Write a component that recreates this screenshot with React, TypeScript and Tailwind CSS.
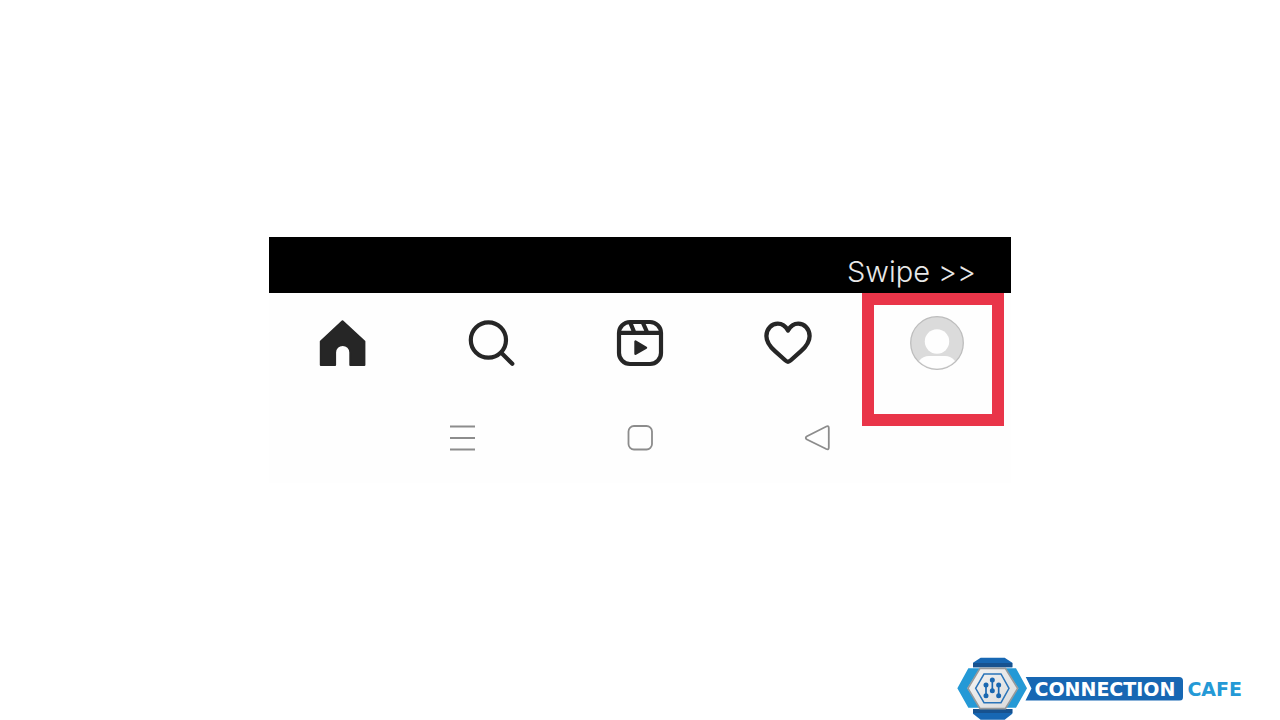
import type { ReactNode } from 'react';

const HomeIcon = () => (
  <svg viewBox="0 0 48 48" className="size-12" fill="#262626" stroke="#262626" strokeWidth="2" strokeLinejoin="round">
    <path d="M23.5 2.2 45.4 22.5V46H31.3V33.5a7.6 7.6 0 0 0-15.2 0V46H1.8V22.5Z" />
  </svg>
);

const SearchIcon = () => (
  <svg viewBox="0 0 48 48" className="size-12" fill="none" stroke="#262626" strokeWidth="4.2" strokeLinecap="round">
    <circle cx="20.4" cy="21" r="17.6" />
    <path d="m33.5 34 10.8 10.8" />
  </svg>
);

const ReelsIcon = () => (
  <svg viewBox="0 0 48 48" className="size-12" fill="none" stroke="#262626" strokeWidth="4.2">
    <rect x="3" y="3" width="42" height="42" rx="11" />
    <path d="M3 13.8h42M14 3l4.5 11M26.5 3l5 11" />
    <path d="M19.5 22.5v12.3L30 28.7Z" fill="#262626" strokeWidth="2.4" strokeLinejoin="round" />
  </svg>
);

const HeartIcon = () => (
  <svg viewBox="0 0 48 48" className="size-12" fill="none" stroke="#262626" strokeWidth="4.3" strokeLinejoin="round">
    <path d="M24 11.5C21.5 7 18 4.7 13.8 4.7 7.5 4.7 2.4 10 2.4 17c0 6.5 3.6 10.7 8.6 15.2L21.5 41.5q2.5 2.3 5 0L37 32.2c5-4.5 8.6-8.7 8.6-15.2 0-7-5.1-12.3-11.4-12.3C30 4.7 26.5 7 24 11.5Z" />
  </svg>
);

const AvatarIcon = () => (
  <svg viewBox="0 0 54 54" className="size-[54px]">
    <circle cx="27" cy="27" r="26.3" fill="#dbdbdb" stroke="#bdbdbd" strokeWidth="1.3" />
    <circle cx="27" cy="25.5" r="12.2" fill="#fefefe" />
    <path d="M9 45q4-5 10-5h16q6 0 10 5a25.5 25.5 0 0 1-36 0Z" fill="#fefefe" />
  </svg>
);

const EmblemIcon = () => (
  <svg viewBox="21 21 204 189" className="h-[63px] w-[68px] shrink-0 overflow-visible">
    <defs>
      <linearGradient id="plate" x1="0" y1="0" x2="1" y2="1">
        <stop offset="0" stopColor="#f4f4f4" />
        <stop offset="1" stopColor="#d9dadb" />
      </linearGradient>
    </defs>
    <path d="M55 55h35L52 115l38 58H55L22 115Z" fill="#2499d6" />
    <path d="M198 55h-34l41 60-41 58h34l33-58Z" fill="#2499d6" />
    <path d="M92 23h72l23 15v14H69V38Z" fill="#1767b3" />
    <path d="M69 39h118v13H69Z" fill="#17528f" />
    <path d="M69 177h118v14l-23 18H92l-23-18Z" fill="#1767b3" />
    <path d="M69 177h118v12H69Z" fill="#17528f" />
    <path d="M90 55h76l37 60-37 61H90l-36-61Z" fill="url(#plate)" stroke="#96999b" strokeWidth="5" />
    <path d="M102 72h51l24 43-24 43h-51l-25-43Z" fill="none" stroke="#2a74b9" strokeWidth="4.5" />
    <g stroke="#1b68b1" strokeWidth="5" fill="#1b68b1">
      <path d="M108 105v32M127 90v32M146 105v32" />
      <circle cx="108" cy="105" r="5" />
      <circle cx="108" cy="137" r="5" />
      <circle cx="127" cy="90" r="5" />
      <circle cx="127" cy="122" r="5" />
      <circle cx="146" cy="105" r="5" />
      <circle cx="146" cy="137" r="5" />
    </g>
  </svg>
);

const NavButton = ({ label, children }: { label: string; children: ReactNode }) => (
  <button type="button" aria-label={label} className="flex h-[54px] items-center justify-center">
    {children}
  </button>
);

const App = () => {
  return (
    <div className="grid min-h-screen grid-rows-[1fr_auto_1fr] bg-white font-['Inter',sans-serif]">
      <main className="row-start-2 mx-auto w-full max-w-[742px] bg-[#fefefe]">
        <div className="flex h-14 items-center justify-end bg-black pt-3.5 pr-[35px]">
          <span className="text-[29px] font-light text-[#e8e8e8]">Swipe &gt;&gt;</span>
        </div>

        <nav className="grid grid-cols-5 pt-[23px]">
          <NavButton label="Home"><HomeIcon /></NavButton>
          <NavButton label="Search"><SearchIcon /></NavButton>
          <NavButton label="Reels"><ReelsIcon /></NavButton>
          <NavButton label="Activity"><HeartIcon /></NavButton>
          <div className="relative grid">
            <NavButton label="Profile"><AvatarIcon /></NavButton>
            <div className="pointer-events-none absolute -top-[23px] right-[7px] h-[133px] w-[142px] border-12 border-[#e93549]" />
          </div>
        </nav>

        <div className="mx-auto flex max-w-[382px] items-center justify-between pt-[54px] pb-8">
          <button type="button" aria-label="Recent apps">
            <svg viewBox="0 0 27 27" className="size-[27px]" stroke="#8c8c8c" strokeWidth="2">
              <path d="M1 2.5h25M1 14h25M1 25.5h25" />
            </svg>
          </button>
          <button type="button" aria-label="Home screen">
            <svg viewBox="0 0 27 27" className="size-[27px]" fill="none" stroke="#8c8c8c" strokeWidth="1.8">
              <rect x="1.5" y="2" width="23.5" height="23.5" rx="5.5" />
            </svg>
          </button>
          <button type="button" aria-label="Back">
            <svg viewBox="0 0 27 27" className="size-[27px]" fill="none" stroke="#8c8c8c" strokeWidth="1.8">
              <path d="M3 12.3 22.3 2.5q2.5-1 2.500 1.500v19.500q0 2.500-2.500 1.500L3 15.500q-2.500-1.600 0-3.200Z" />
            </svg>
          </button>
        </div>
      </main>

      <footer className="row-start-3 flex items-end justify-end pr-[38px]">
        <a href="#" className="flex items-center font-['DejaVu_Sans',sans-serif] text-[19px] leading-6 font-bold">
          <EmblemIcon />
          <span className="rounded-r-sm bg-[#1767b3] pr-2 pl-[9px] text-white [clip-path:polygon(0_0,100%_0,100%_100%,0_100%,6px_50%)]">
            CONNECTION
          </span>
          <span className="pl-1 text-[#2499d6]">CAFE</span>
        </a>
      </footer>
    </div>
  );
};

export default App;
